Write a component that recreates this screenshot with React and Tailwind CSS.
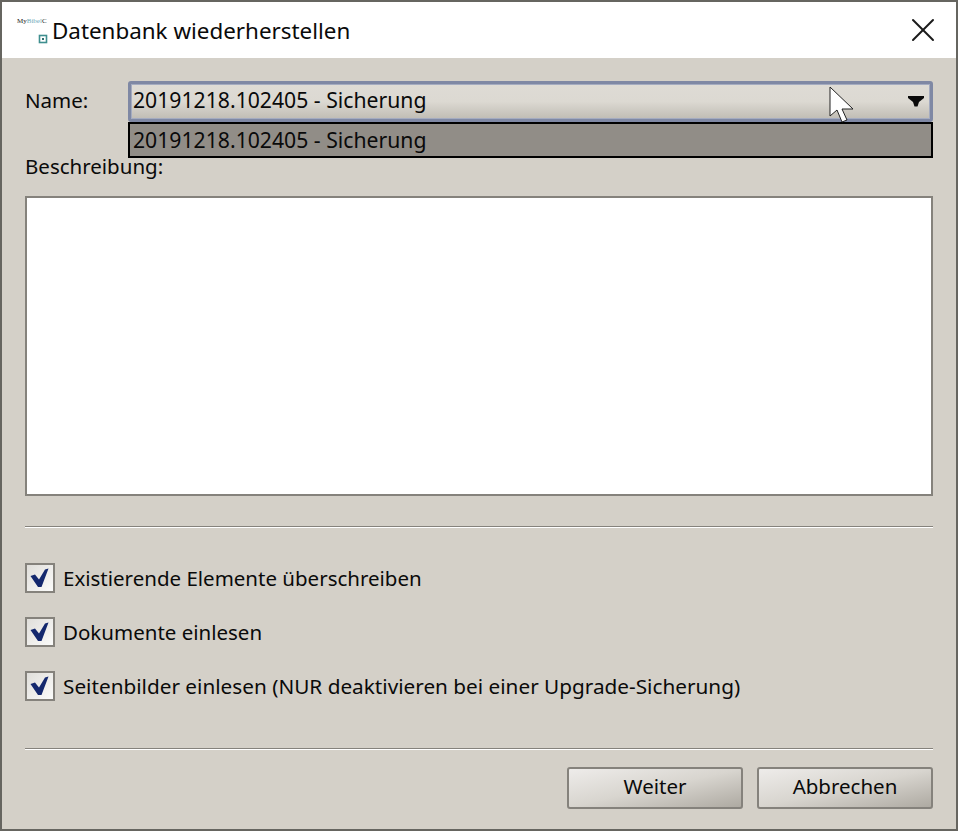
import React from 'react';
import { X } from 'lucide-react';

const options = [
  { text: 'Existierende Elemente überschreiben', size: 'text-[20.5px]' },
  { text: 'Dokumente einlesen', size: 'text-[20.5px]' },
  { text: 'Seitenbilder einlesen (NUR deaktivieren bei einer Upgrade-Sicherung)', size: 'text-[20.75px]' },
];

const Check = () => (
  <span className="flex h-[30px] w-[30px] shrink-0 items-center justify-center border-2 border-[#85827c] bg-gradient-to-br from-[#e0deda] to-[#fbfbfa]">
    <svg width="20" height="20" viewBox="0 0 20 20">
      <path d="M0.5 8 L5 6.5 L9 11.5 L15 1.5 L18.5 0.5 L11.5 19 L8 19 Z" fill="#14286e" />
    </svg>
  </span>
);

const Separator = () => (
  <div className="h-[2px] border-t border-[#85827c] bg-white" />
);

const DialogButton = ({ children }) => (
  <button className="h-[42px] w-[176px] rounded-[3px] border-2 border-[#85827c] bg-gradient-to-br from-[#eeecea] via-[#d8d5cf] to-[#aeaaa2] pb-[4px] text-[20.5px] text-[#0a0a0a]">
    {children}
  </button>
);

export default function App() {
  return (
    <div className="flex h-[831px] w-[958px] flex-col border-2 border-[#666560] bg-[#d4d0c8] font-['Noto_Sans',sans-serif] text-[20.5px] leading-[28px] text-[#0a0a0a]">
      {/* Title bar */}
      <div className="flex h-[56px] shrink-0 items-center bg-white pl-[14px] pr-[13px]">
        <svg width="36" height="32" viewBox="0 0 36 32" className="shrink-0">
          <text x="1" y="9" fontSize="7" fontFamily="Liberation Serif, serif" fill="#222">
            My<tspan fill="#6fa8b8">Bibel</tspan>C
          </text>
          <rect x="23.5" y="21.5" width="7" height="7" fill="none" stroke="#3f8f8f" strokeWidth="1.6" />
          <rect x="26" y="24" width="2" height="2" fill="#2f6f6f" />
        </svg>
        <span className="pt-[1px] text-[22.4px]">Datenbank wiederherstellen</span>
        <X className="ml-auto h-[40px] w-[40px] text-[#1a1a1a]" strokeWidth={1.2} />
      </div>

      <div className="flex flex-1 flex-col px-[23px]">
        {/* Name row with open dropdown */}
        <div className="mt-[23px] flex items-center">
          <label className="w-[103px] pb-[4px]">Name:</label>
          <div className="relative flex-1">
            <div className="flex h-[41px] items-center justify-between rounded-[3px] border-[3px] border-[#7f88a4] bg-gradient-to-b from-[#dedbd5] via-[#dcd9d2] to-[#c0bcb4] pb-[4px] pl-[2px] pr-[6px] shadow-[inset_0_0_0_1px_#a4abc0]">
              <span className="text-[21.2px]">20191218.102405 - Sicherung</span>
              <svg width="16" height="11" viewBox="0 0 16 11" className="mt-[4px]">
                <path d="M0 0 H16 V2 L11 6 L9.5 10.5 H6.5 L5 6 L0 2 Z" fill="#0a0a0a" />
              </svg>
            </div>
            <div className="absolute left-0 right-0 top-[41px] flex h-[36px] items-center border-2 border-black bg-[#918d87] pl-[3px] text-[21.2px]">
              20191218.102405 - Sicherung
            </div>
            {/* Mouse pointer */}
            <svg width="26" height="38" viewBox="0 0 26 38" className="absolute left-[701px] top-[5px]">
              <path d="M1 1 L1 30 L8 24 L13 36 L18 34 L13 23 L24 23 Z" fill="#fff" stroke="#222" strokeWidth="1" />
            </svg>
          </div>
        </div>

        {/* Description */}
        <label className="mt-[30px]">Beschreibung:</label>
        <div className="mt-[16px] h-[300px] border-2 border-[#85827c] bg-white" />

        <div className="mt-[30px]">
          <Separator />
        </div>

        <div className="mt-[35px] flex flex-col gap-[24px]">
          {options.map((option) => (
            <div key={option.text} className="flex items-center gap-[8px]">
              <Check />
              <span className={option.size}>{option.text}</span>
            </div>
          ))}
        </div>

        <div className="mt-[47px]">
          <Separator />
        </div>

        <div className="mt-[17px] flex justify-end gap-[14px]">
          <DialogButton>Weiter</DialogButton>
          <DialogButton>Abbrechen</DialogButton>
        </div>
      </div>
    </div>
  );
}
